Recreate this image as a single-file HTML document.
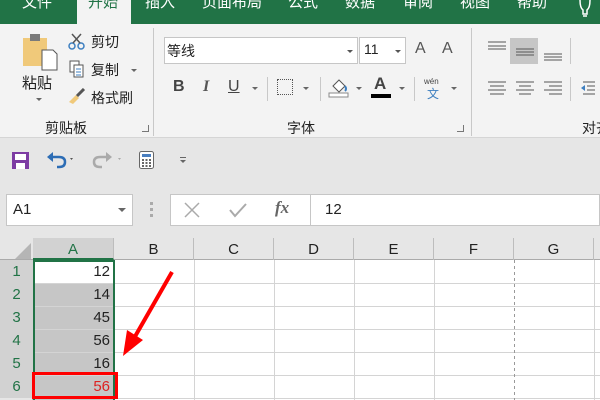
<!DOCTYPE html>
<html><head><meta charset="utf-8"><style>
*{margin:0;padding:0;box-sizing:border-box}
body{width:600px;height:400px;overflow:hidden;background:#e6e6e6;font-family:"Liberation Sans","Noto Sans CJK SC",sans-serif;position:relative;color:#222}
.a{position:absolute;white-space:nowrap}
.tabs{left:0;top:0;width:600px;height:24px;background:#217346}
.tab{position:absolute;top:-6px;color:#fff;font-size:15px;line-height:18px;white-space:nowrap}
.rib{left:0;top:24px;width:600px;height:114px;background:#f3f3f3;border-bottom:1px solid #d5d5d5}
.t{font-size:14px;color:#222}
.sep{width:1px;background:#c8c8c8}
.cell{position:absolute;font-size:15px;text-align:right}
.hl{position:absolute;left:33px;width:567px;height:1px;background:#d4d4d4}
.vl{position:absolute;top:260px;width:1px;height:140px;background:#d4d4d4}
.ch{position:absolute;top:238px;height:22px;font-size:15px;text-align:center;line-height:24px;border-right:1px solid #bdbdbd}
.rh{position:absolute;left:0;width:33px;height:23px;font-size:15px;text-align:center;color:#444;line-height:24px;background:#e6e6e6}
</style></head><body>
<div class="a tabs"></div>
<div class="a" style="left:77px;top:0;width:54px;height:24px;background:#f3f3f3"></div>
<div class="tab" style="left:22px">文件</div>
<div class="tab" style="left:88px;color:#217346">开始</div>
<div class="tab" style="left:145px">插入</div>
<div class="tab" style="left:202px">页面布局</div>
<div class="tab" style="left:288px">公式</div>
<div class="tab" style="left:345px">数据</div>
<div class="tab" style="left:403px">审阅</div>
<div class="tab" style="left:460px">视图</div>
<div class="tab" style="left:517px">帮助</div>
<svg class="a" style="left:578px;top:0" width="14" height="18"><path d="M2 0 Q2 8 5 10 L5 14 L9 14 L9 10 Q12 8 12 0" fill="none" stroke="#fff" stroke-width="1.5"/><path d="M5 16 H9" stroke="#fff" stroke-width="1.5"/></svg>
<div class="a rib"></div>
<svg class="a" style="left:22px;top:32px" width="36" height="40"><rect x="1" y="6" width="24" height="28" fill="#f0c97a"/><rect x="8" y="2" width="10" height="7" fill="#7a7a7a"/><path d="M20 18 H31 L35 22 V38 H20 Z" fill="#fff" stroke="#555"/></svg>
<div class="a t" style="left:22px;top:72px;font-size:15px">粘贴</div>
<div class="a" style="left:36px;top:98px;border:3px solid transparent;border-top:3px solid #666"></div>
<svg class="a" style="left:68px;top:32px" width="18" height="18"><circle cx="4" cy="14" r="3" fill="none" stroke="#3d7fc0" stroke-width="1.5"/><circle cx="13" cy="14" r="3" fill="none" stroke="#3d7fc0" stroke-width="1.5"/><path d="M5 11 L13 2 M12 11 L4 2" stroke="#555" stroke-width="1.5"/></svg>
<div class="a t" style="left:91px;top:32px">剪切</div>
<svg class="a" style="left:69px;top:60px" width="16" height="18"><rect x="1" y="1" width="9" height="11" fill="#fff" stroke="#555"/><rect x="5" y="5" width="9" height="12" fill="#fff" stroke="#555"/><path d="M7 9h5M7 12h5M7 15h5" stroke="#3d7fc0"/></svg>
<div class="a t" style="left:91px;top:60px">复制</div>
<div class="a" style="left:131px;top:69px;border:3px solid transparent;border-top:3px solid #666"></div>
<svg class="a" style="left:68px;top:88px" width="18" height="18"><path d="M1 14 L8 7 L11 10 L5 16 Z" fill="#f0c97a"/><path d="M9 8 L16 1" stroke="#555" stroke-width="3"/></svg>
<div class="a t" style="left:91px;top:88px">格式刷</div>
<div class="a t" style="left:45px;top:118px">剪贴板</div>
<div class="a sep" style="left:153px;top:28px;height:108px"></div>
<div class="a" style="left:164px;top:37px;width:194px;height:27px;background:#fff;border:1px solid #c6c6c6"></div>
<div class="a t" style="left:167px;top:41px">等线</div>
<div class="a" style="left:347px;top:50px;border:3px solid transparent;border-top:3px solid #555"></div>
<div class="a" style="left:359px;top:37px;width:47px;height:27px;background:#fff;border:1px solid #c6c6c6"></div>
<div class="a t" style="left:364px;top:41px">11</div>
<div class="a" style="left:395px;top:50px;border:3px solid transparent;border-top:3px solid #555"></div>
<div class="a" style="left:415px;top:40px;font-size:16px;color:#555">A</div>
<div class="a" style="left:442px;top:40px;font-size:16px;color:#555">A</div>
<div class="a" style="left:173px;top:78px;font-size:16px;font-weight:bold;color:#444">B</div>
<div class="a" style="left:203px;top:78px;font-size:16px;font-style:italic;font-family:'Liberation Serif',serif;font-weight:bold;color:#555">I</div>
<div class="a" style="left:228px;top:78px;font-size:16px;text-decoration:underline;color:#444">U</div>
<div class="a" style="left:252px;top:87px;border:3px solid transparent;border-top:3px solid #666"></div>
<div class="a sep" style="left:267px;top:77px;height:24px"></div>
<div class="a" style="left:277px;top:79px;width:16px;height:16px;border:1px dotted #555"></div>
<div class="a" style="left:303px;top:87px;border:3px solid transparent;border-top:3px solid #666"></div>
<div class="a sep" style="left:320px;top:77px;height:24px"></div>
<svg class="a" style="left:328px;top:76px" width="22" height="22"><path d="M5 10 L11 4 L17 10 L11 16 Z" fill="#fff" stroke="#555"/><path d="M17 10 q2 3 0 5" stroke="#3d7fc0" stroke-width="2" fill="none"/><rect x="1" y="17" width="19" height="4" fill="#fff" stroke="#888"/></svg>
<div class="a" style="left:356px;top:87px;border:3px solid transparent;border-top:3px solid #666"></div>
<div class="a" style="left:374px;top:74px;font-size:17px;font-weight:bold;color:#444">A</div>
<div class="a" style="left:371px;top:94px;width:20px;height:4px;background:#000"></div>
<div class="a" style="left:399px;top:87px;border:3px solid transparent;border-top:3px solid #666"></div>
<div class="a sep" style="left:414px;top:77px;height:24px"></div>
<div class="a" style="left:424px;top:77px;font-size:8px;color:#444">wén</div>
<div class="a" style="left:427px;top:85px;font-size:12px;color:#3d7fc0">文</div>
<div class="a" style="left:451px;top:87px;border:3px solid transparent;border-top:3px solid #666"></div>
<div class="a t" style="left:287px;top:118px">字体</div>
<div class="a" style="left:457px;top:125px;width:7px;height:7px;border-right:1px solid #777;border-bottom:1px solid #777"></div>
<div class="a" style="left:142px;top:125px;width:7px;height:7px;border-right:1px solid #777;border-bottom:1px solid #777"></div>
<div class="a sep" style="left:471px;top:28px;height:108px"></div>
<div class="a" style="left:510px;top:38px;width:28px;height:26px;background:#c6c6c6"></div>
<svg class="a" style="left:485px;top:40px" width="110" height="60"><g stroke="#555" stroke-width="1"><path d="M3 2h18M3 6h18M3 9h18"/><path d="M31 9h18M31 12h18M31 15h18"/><path d="M59 14h18M59 17h18M59 20h18"/><path d="M3 42h18M5 46h14M3 50h18M5 54h14"/><path d="M31 42h18M34 46h12M31 50h18M34 54h12"/><path d="M59 42h18M64 46h13M59 50h18M64 54h13"/></g><path d="M98 42h12M102 46h8M102 50h8M98 54h12" stroke="#555"/><path d="M96 48 l4 -3 v6z" fill="#3d7fc0"/></svg>
<div class="a sep" style="left:570px;top:38px;height:26px"></div>
<div class="a sep" style="left:570px;top:77px;height:24px"></div>
<div class="a t" style="left:582px;top:118px">对齐</div>
<svg class="a" style="left:12px;top:152px" width="17" height="17"><rect x="0" y="0" width="17" height="17" fill="#7d3ca3"/><rect x="3" y="2" width="11" height="6" fill="#fff"/><rect x="4" y="11" width="9" height="6" fill="#fff"/></svg>
<svg class="a" style="left:46px;top:150px" width="30" height="20"><path d="M5 7 H13 Q19 7 19 12 Q19 17 13 17 H11" fill="none" stroke="#2d6db5" stroke-width="2.5"/><path d="M1 7 L7 2 V12 Z" fill="#2d6db5"/><path d="M24 8 l3 0 l-1.5 2z" fill="#555"/></svg>
<svg class="a" style="left:92px;top:150px" width="30" height="20"><path d="M16 7 H8 Q2 7 2 12 Q2 17 8 17 H10" fill="none" stroke="#aaa" stroke-width="2.5"/><path d="M20 7 L14 2 V12 Z" fill="#aaa"/><path d="M26 8 l3 0 l-1.5 2z" fill="#aaa"/></svg>
<svg class="a" style="left:139px;top:151px" width="16" height="19"><rect x="0.5" y="0.5" width="14" height="17" rx="2" fill="#fff" stroke="#666"/><rect x="3" y="3" width="9" height="3" fill="#4a7fc0"/><g fill="#666"><rect x="3" y="8" width="2" height="2"/><rect x="6.5" y="8" width="2" height="2"/><rect x="10" y="8" width="2" height="2"/><rect x="3" y="11" width="2" height="2"/><rect x="6.5" y="11" width="2" height="2"/><rect x="10" y="11" width="2" height="2"/><rect x="3" y="14" width="2" height="2"/><rect x="6.5" y="14" width="2" height="2"/><rect x="10" y="14" width="2" height="2"/></g></svg>
<div class="a" style="left:180px;top:157px;width:6px;height:1px;background:#666"></div>
<div class="a" style="left:180px;top:160px;border:3px solid transparent;border-top:3px solid #666"></div>
<div class="a" style="left:6px;top:194px;width:127px;height:32px;background:#fff;border:1px solid #c6c6c6"></div>
<div class="a" style="left:13px;top:201px;font-size:15px">A1</div>
<div class="a" style="left:118px;top:208px;border:4px solid transparent;border-top:4px solid #666"></div>
<div class="a" style="left:150px;top:202px;width:3px;height:3px;background:#aaa;box-shadow:0 6px #aaa,0 12px #aaa"></div>
<div class="a" style="left:170px;top:194px;width:430px;height:32px;background:#fff;border:1px solid #c6c6c6"></div>
<div class="a" style="left:310px;top:195px;width:1px;height:30px;background:#c6c6c6"></div>
<svg class="a" style="left:184px;top:202px" width="16" height="16"><path d="M1 1L15 15M15 1L1 15" stroke="#aaa" stroke-width="1.5"/></svg>
<svg class="a" style="left:228px;top:202px" width="20" height="16"><path d="M2 8L7 14L18 2" stroke="#aaa" stroke-width="2" fill="none"/></svg>
<div class="a" style="left:275px;top:198px;font-size:17px;font-style:italic;font-family:'Liberation Serif',serif;font-weight:bold;color:#666">fx</div>
<div class="a" style="left:325px;top:201px;font-size:15px">12</div>
<div class="a" style="left:0;top:238px;width:600px;height:22px;background:#e6e6e6;border-bottom:1px solid #aaa"></div>
<div class="a" style="left:0;top:260px;width:600px;height:140px;background:#fff"></div>
<svg class="a" style="left:15px;top:243px" width="16" height="16"><path d="M16 0V16H0Z" fill="#b5b5b5"/></svg>
<div class="ch" style="left:33px;width:81px;background:#d2d2d2;color:#217346;border-bottom:2px solid #217346">A</div>
<div class="ch" style="left:114px;width:80px">B</div>
<div class="ch" style="left:194px;width:80px">C</div>
<div class="ch" style="left:274px;width:80px">D</div>
<div class="ch" style="left:354px;width:80px">E</div>
<div class="ch" style="left:434px;width:80px">F</div>
<div class="ch" style="left:514px;width:80px">G</div>
<div class="a" style="left:33px;top:283px;width:81px;height:117px;background:#c6c6c6"></div>
<div class="hl" style="top:283px"></div><div class="hl" style="top:306px"></div><div class="hl" style="top:329px"></div><div class="hl" style="top:352px"></div><div class="hl" style="top:375px"></div><div class="hl" style="top:398px"></div>
<div class="vl" style="left:114px"></div><div class="vl" style="left:194px"></div><div class="vl" style="left:274px"></div><div class="vl" style="left:354px"></div><div class="vl" style="left:434px"></div><div class="vl" style="left:514px;background:repeating-linear-gradient(#999 0 3px,transparent 3px 6px)"></div><div class="vl" style="left:594px"></div>
<div class="a" style="left:0;top:260px;width:33px;height:140px;background:#e6e6e6;border-right:1px solid #bbb"></div>
<div class="rh" style="top:260px;background:#d2d2d2;color:#217346">1</div>
<div class="rh" style="top:283px;background:#d2d2d2;color:#217346">2</div>
<div class="rh" style="top:306px;background:#d2d2d2;color:#217346">3</div>
<div class="rh" style="top:329px;background:#d2d2d2;color:#217346">4</div>
<div class="rh" style="top:352px;background:#d2d2d2;color:#217346">5</div>
<div class="rh" style="top:375px;background:#d2d2d2;color:#217346">6</div>
<div class="a" style="left:33px;top:260px;width:82px;height:140px;border:2px solid #217346;border-bottom:none"></div>
<div class="cell" style="left:40px;width:70px;top:263px">12</div>
<div class="cell" style="left:40px;width:70px;top:286px">14</div>
<div class="cell" style="left:40px;width:70px;top:309px">45</div>
<div class="cell" style="left:40px;width:70px;top:332px">56</div>
<div class="cell" style="left:40px;width:70px;top:355px">16</div>
<div class="cell" style="left:40px;width:70px;top:378px;color:#d22">56</div>
<div class="a" style="left:32px;top:372px;width:86px;height:27px;border:3px solid #f00"></div>
<svg class="a" style="left:115px;top:265px" width="65" height="95"><path d="M57 7 L18 75" stroke="#f00" stroke-width="4"/><path d="M8 91 L12 65 L28 75 Z" fill="#f00"/></svg>
</body></html>
